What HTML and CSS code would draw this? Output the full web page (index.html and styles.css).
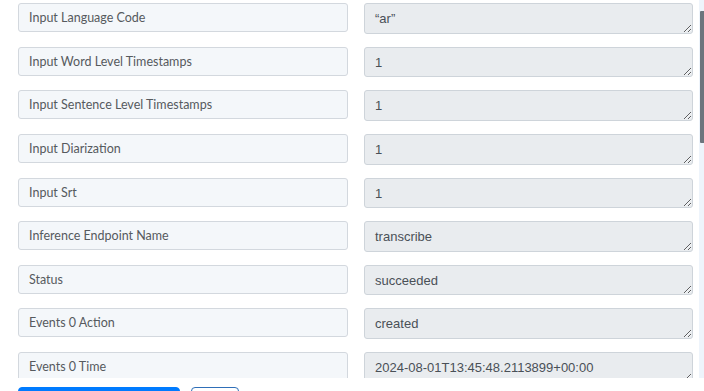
FILE: index.html
```html
<!DOCTYPE html>
<html>
<head>
<meta charset="utf-8">
<link rel="stylesheet" href="styles.css">
</head>
<body>
<div class="frame">
  <div class="content">
    <div class="fields">
      <input class="label" readonly value="Input Language Code">
      <textarea class="value" readonly>“ar”</textarea>
      <input class="label" readonly value="Input Word Level Timestamps">
      <textarea class="value" readonly>1</textarea>
      <input class="label" readonly value="Input Sentence Level Timestamps">
      <textarea class="value" readonly>1</textarea>
      <input class="label" readonly value="Input Diarization">
      <textarea class="value" readonly>1</textarea>
      <input class="label" readonly value="Input Srt">
      <textarea class="value" readonly>1</textarea>
      <input class="label" readonly value="Inference Endpoint Name">
      <textarea class="value" readonly>transcribe</textarea>
      <input class="label" readonly value="Status">
      <textarea class="value" readonly>succeeded</textarea>
      <input class="label" readonly value="Events 0 Action">
      <textarea class="value" readonly>created</textarea>
      <input class="label" readonly value="Events 0 Time">
      <textarea class="value" readonly>2024-08-01T13:45:48.2113899+00:00</textarea>
      <input class="label" readonly value="Events 0 Message">
      <textarea class="value" readonly>Created</textarea>
    </div>
  </div>
  <div class="scrollbar"><div class="thumb"></div></div>
</div>
<div class="actions">
  <button class="btn btn-primary">Send Test Request</button>
  <button class="btn btn-outline">Skip</button>
</div>
</body>
</html>
```

FILE: styles.css
```css
html, body {
  margin: 0;
  padding: 0;
  background: #ffffff;
}
body {
  width: 704px;
  height: 391px;
  overflow: hidden;
}
.frame {
  display: flex;
  height: 378px;
}
.content {
  flex: 1;
  overflow: hidden;
  padding: 3px 6px 0 18px;
}
.fields {
  display: grid;
  grid-template-columns: 330px 329px;
  column-gap: 16px;
  grid-auto-rows: 30.625px;
  row-gap: 13px;
}
.label {
  box-sizing: border-box;
  height: 29px;
  width: 100%;
  margin: 0;
  padding: 0 10px;
  border: 1px solid #d3d8de;
  border-radius: 3px;
  background: #f4f7fa;
  font-family: Lato, "Open Sans", sans-serif;
  font-size: 12.5px;
  color: #565a5e;
  outline: none;
}
.value {
  box-sizing: border-box;
  height: 30.625px;
  width: 100%;
  margin: 0;
  padding: 6px 10px 0 10px;
  border: 1px solid #ced4da;
  border-radius: 3px;
  background: #e9ecef;
  font-family: "Liberation Sans", Arial, sans-serif;
  font-size: 13px;
  line-height: 17px;
  color: #495057;
  resize: vertical;
  overflow: hidden;
  outline: none;
}
.scrollbar {
  width: 5px;
  background: #eef4fb;
  display: flex;
  flex-direction: column;
  align-items: flex-end;
}
.thumb {
  margin-top: 11px;
  width: 4px;
  height: 132px;
  background: #6c757d;
  border-radius: 1px 0 0 1px;
}
.actions {
  display: flex;
  gap: 11px;
  padding: 9px 0 0 18px;
}
.btn {
  box-sizing: border-box;
  height: 34px;
  border-radius: 4px;
  font-family: Lato, sans-serif;
  font-size: 13px;
  padding: 0;
}
.btn-primary {
  width: 162px;
  background: #007bff;
  border: 1px solid #007bff;
  color: #fff;
}
.btn-outline {
  width: 48px;
  background: #fff;
  border: 1px solid #2f6fb8;
  color: #2f6fb8;
}
```
